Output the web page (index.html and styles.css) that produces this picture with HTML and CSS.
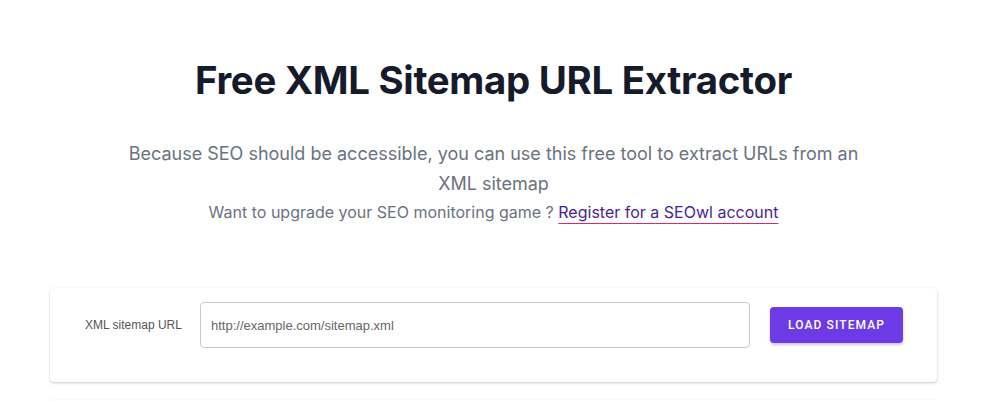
FILE: index.html
```html
<!DOCTYPE html>
<html lang="en">
<head>
<meta charset="utf-8">
<title>Free XML Sitemap URL Extractor</title>
<link rel="stylesheet" href="styles.css">
</head>
<body>
<main class="page">
  <header class="hero">
    <h1 class="title">Free XML Sitemap URL Extractor</h1>
    <p class="lead">Because SEO should be accessible, you can use this free tool to extract URLs from an XML sitemap</p>
    <p class="cta">Want to upgrade your SEO monitoring game ? <a class="cta-link" href="#">Register for a SEOwl account</a></p>
  </header>
  <section class="card">
    <form class="form-row">
      <label class="label" for="url">XML sitemap URL</label>
      <input class="input" id="url" type="text" placeholder="http://example.com/sitemap.xml">
      <button class="btn" type="button">Load sitemap</button>
    </form>
  </section>
  <section class="card card-next"></section>
</main>
</body>
</html>
```
FILE: styles.css
```css
* { box-sizing: border-box; }
html, body { margin: 0; padding: 0; background: #ffffff; }
body { font-family: Inter, "Noto Sans", sans-serif; color: #111827; }
.page { width: 887px; margin-left: 50px; padding-top: 52px; }
.hero { display: flex; flex-direction: column; align-items: center; text-align: center; }
.title { margin: 0; font-size: 38.4px; font-weight: 700; line-height: 56px; letter-spacing: -0.3px; color: #161b2c; }
.lead { margin: 31px 0 0; max-width: 740px; font-size: 18px; line-height: 30px; color: #6b7280; font-weight: 400; }
.cta { margin: 0; font-size: 16px; line-height: 26px; color: #6b7280; }
.cta-link { color: #4c1d95; text-decoration: underline; text-decoration-color: #db2777; text-underline-offset: 5px; text-decoration-thickness: 1px; }
.card { margin-top: 63px; background: #fff; border-radius: 4px; box-shadow: 0 1px 3px rgba(0,0,0,0.18), 0 1px 2px rgba(0,0,0,0.06); padding: 14px 34px 34px 35px; }
.form-row { display: flex; align-items: center; margin: 0; }
.label { font-family: "Helvetica Neue", "Liberation Sans", Arial, sans-serif; font-size: 12px; color: #555; width: 115px; flex: none; }
.input { width: 551px; height: 46px; border: 1px solid #c8c8c8; border-radius: 4px; padding: 0 10px; font-family: "Helvetica Neue", "Liberation Sans", Arial, sans-serif; font-size: 13px; color: #333; outline: none; }
.input::placeholder { color: #666; }
.btn { margin-left: 20px; width: 133px; height: 36px; border: none; border-radius: 4px; background: #6d3be6; color: #fff; font-family: Roboto, "Liberation Sans", sans-serif; font-size: 12px; font-weight: 500; letter-spacing: 1.1px; text-transform: uppercase; box-shadow: 0 2px 3px rgba(60,30,140,0.25); cursor: pointer; }
.card-next { margin-top: 18px; height: 20px; padding: 0; }
```
